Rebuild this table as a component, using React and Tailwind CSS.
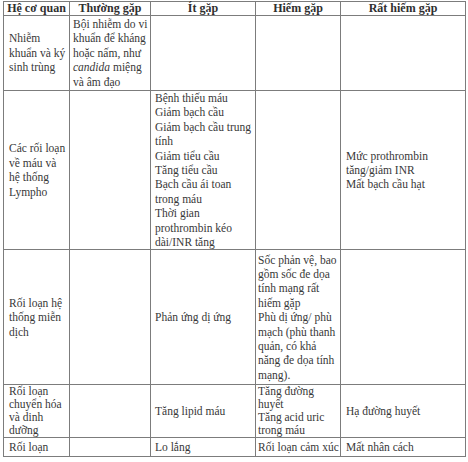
import React from 'react';

const rows = [
    {
        h: 'h-[75px]',
        cells: [
            ['Nhiễm', 'khuẩn và ký', 'sinh trùng'],
            ['Bội nhiễm do vi', 'khuẩn để kháng', 'hoặc nấm, như', <><i>candida</i> miệng</>, 'và âm đạo'],
            [],
            [],
            [],
        ],
    },
    {
        h: 'h-[159px]',
        cells: [
            ['Các rối loạn', 'về máu và', 'hệ thống', 'Lympho'],
            [],
            [
                'Bệnh thiếu máu',
                'Giảm bạch cầu',
                'Giảm bạch cầu trung',
                'tính',
                'Giảm tiểu cầu',
                'Tăng tiểu cầu',
                'Bạch cầu ái toan',
                'trong máu',
                'Thời gian',
                'prothrombin kéo',
                'dài/INR tăng',
            ],
            [],
            ['Mức prothrombin', 'tăng/giảm INR', 'Mất bạch cầu hạt'],
        ],
    },
    {
        h: 'h-[135px]',
        cells: [
            ['Rối loạn hệ', 'thống miễn', 'dịch'],
            [],
            ['Phản ứng dị ứng'],
            [
                'Sốc phản vệ, bao',
                'gồm sốc đe dọa',
                'tính mạng rất',
                'hiếm gặp',
                'Phù dị ứng/ phù',
                'mạch (phù thanh',
                'quản, có khả',
                'năng đe dọa tính',
                'mạng).',
            ],
            [],
        ],
    },
    {
        h: 'h-[52px]',
        tight: true,
        cells: [
            ['Rối loạn', 'chuyển hóa', 'và dinh', 'dưỡng'],
            [],
            ['Tăng lipid máu'],
            ['Tăng đường', 'huyết', 'Tăng acid uric', 'trong máu'],
            ['Hạ đường huyết'],
        ],
    },
    {
        h: 'h-[19px]',
        cells: [['Rối loạn'], [], ['Lo lắng'], ['Rối loạn cảm xúc'], ['Mất nhân cách']],
    },
];

const pads = ['pl-[5px]', 'pl-[3px]', 'pl-[4px]', 'pl-[2px]', 'pl-[5px]'];
const headers = ['Hệ cơ quan', 'Thường gặp', 'Ít gặp', 'Hiếm gặp', 'Rất hiếm gặp'];

const App = () => {
    return (
        <div className="w-[468px] h-[462px] bg-white overflow-hidden pl-[3px] pt-[1px] [font-family:'Liberation_Serif','Times_New_Roman',serif] text-[#383838]">
            <table className="w-[462px] table-fixed border-collapse">
                <colgroup>
                    <col className="w-[66px]" />
                    <col className="w-[81px]" />
                    <col className="w-[105px]" />
                    <col className="w-[85px]" />
                    <col className="w-[125px]" />
                </colgroup>
                <thead>
                    <tr className="h-[14px]">
                        {headers.map((t, i) => (
                            <th
                                key={i}
                                className="border border-[#7c7c7c] p-0 text-center text-[12px] leading-[13px] font-semibold text-[#2f2f2f]"
                            >
                                {t}
                            </th>
                        ))}
                    </tr>
                </thead>
                <tbody>
                    {rows.map((row, r) => (
                        <tr key={r} className={row.h}>
                            {row.cells.map((lines, c) => (
                                <td
                                    key={c}
                                    className={`border border-[#7c7c7c] p-0 ${pads[c]} align-middle text-[11.5px] whitespace-nowrap ${
                                        row.tight ? 'leading-[13px]' : 'leading-[14.4px]'
                                    }`}
                                >
                                    {lines.map((l, k) => (
                                        <div key={k}>{l}</div>
                                    ))}
                                </td>
                            ))}
                        </tr>
                    ))}
                </tbody>
            </table>
        </div>
    );
};

export default App;
